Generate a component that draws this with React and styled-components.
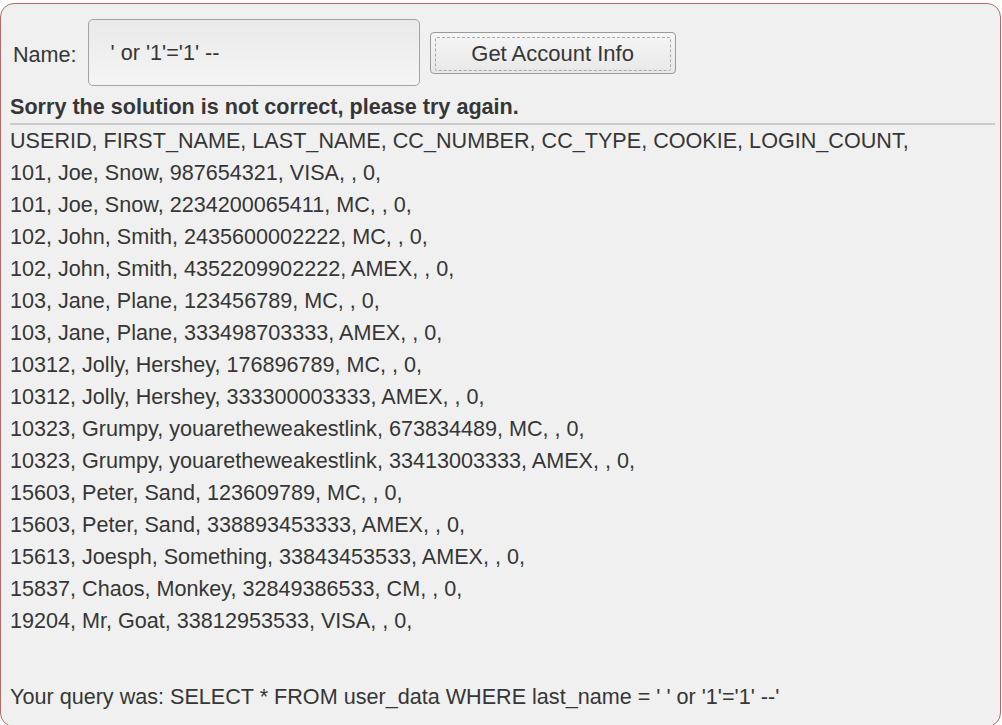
import React from "react";
import styled, { createGlobalStyle } from "styled-components";

const Global = createGlobalStyle`
  html, body {
    margin: 0;
    padding: 0;
    background: #ffffff;
  }
  body {
    font-family: "Liberation Sans", Arial, sans-serif;
    overflow: hidden;
  }
`;

const Panel = styled.div`
  margin-top: 3px;
  width: 1001px;
  height: 724px;
  box-sizing: border-box;
  border: 1px solid #b46a6a;
  border-radius: 14px;
  background: #f0f0f0;
  color: #363636;
  font-size: 21.6px;
  padding: 0 5px 0 9px;
`;

const Form = styled.form`
  display: flex;
  align-items: center;
  padding-top: 15px;
  height: 67px;
  padding-left: 3px;
`;

const Label = styled.label`
  margin-right: 11px;
  margin-top: 4px;
`;

const NameInput = styled.input`
  width: 332px;
  height: 67px;
  box-sizing: border-box;
  border: 1px solid #a3a3a3;
  border-radius: 5px;
  background: linear-gradient(#e9e9e9, #f5f5f5);
  font-family: "Liberation Sans", Arial, sans-serif;
  font-size: 21.6px;
  color: #363636;
  padding: 0 0 0 22px;
  outline: none;
`;

const Button = styled.button`
  margin-left: 10px;
  margin-top: 1px;
  width: 246px;
  height: 42px;
  box-sizing: border-box;
  border: 1px solid #9a9a9a;
  border-radius: 4px;
  background: linear-gradient(#f6f6f6, #e8e8e8);
  padding: 4px;
  font-family: "Liberation Sans", Arial, sans-serif;
  font-size: 22px;
  color: #363636;
  cursor: pointer;
`;

const ButtonFocus = styled.span`
  display: flex;
  align-items: center;
  justify-content: center;
  height: 100%;
  border: 1px dashed #a8a8a8;
  border-radius: 2px;
`;

const Message = styled.div`
  font-weight: bold;
  line-height: 24px;
  margin-top: 9px;
  padding-bottom: 4px;
  border-bottom: 2px solid #cccccc;
`;

const Results = styled.div`
  line-height: 32px;
  white-space: nowrap;
`;

const Query = styled.div`
  margin-top: 44px;
  line-height: 32px;
  white-space: nowrap;
`;

const rows = [
  "USERID, FIRST_NAME, LAST_NAME, CC_NUMBER, CC_TYPE, COOKIE, LOGIN_COUNT,",
  "101, Joe, Snow, 987654321, VISA, , 0,",
  "101, Joe, Snow, 2234200065411, MC, , 0,",
  "102, John, Smith, 2435600002222, MC, , 0,",
  "102, John, Smith, 4352209902222, AMEX, , 0,",
  "103, Jane, Plane, 123456789, MC, , 0,",
  "103, Jane, Plane, 333498703333, AMEX, , 0,",
  "10312, Jolly, Hershey, 176896789, MC, , 0,",
  "10312, Jolly, Hershey, 333300003333, AMEX, , 0,",
  "10323, Grumpy, youaretheweakestlink, 673834489, MC, , 0,",
  "10323, Grumpy, youaretheweakestlink, 33413003333, AMEX, , 0,",
  "15603, Peter, Sand, 123609789, MC, , 0,",
  "15603, Peter, Sand, 338893453333, AMEX, , 0,",
  "15613, Joesph, Something, 33843453533, AMEX, , 0,",
  "15837, Chaos, Monkey, 32849386533, CM, , 0,",
  "19204, Mr, Goat, 33812953533, VISA, , 0,",
];

const App = () => {
  return (
    <>
      <Global />
      <Panel>
        <Form onSubmit={(e) => e.preventDefault()}>
          <Label>Name:</Label>
          <NameInput type="text" defaultValue="' or '1'='1' --" />
          <Button type="submit">
            <ButtonFocus>Get Account Info</ButtonFocus>
          </Button>
        </Form>
        <Message>Sorry the solution is not correct, please try again.</Message>
        <Results>
          {rows.map((r, i) => (
            <div key={i}>{r}</div>
          ))}
        </Results>
        <Query>
          Your query was: SELECT * FROM user_data WHERE last_name = ' ' or '1'='1' --'
        </Query>
      </Panel>
    </>
  );
};

export default App;
